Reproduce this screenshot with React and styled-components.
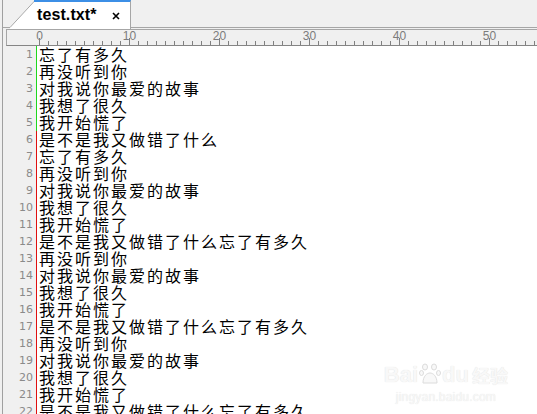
import React from "react";
import styled, { createGlobalStyle } from "styled-components";

const Global = createGlobalStyle`
  html, body { margin: 0; padding: 0; background: #f0f0f0; }
  body { width: 537px; height: 414px; overflow: hidden; }
`;

const Frame = styled.div`
  position: relative;
  width: 535px;
  height: 414px;
  margin-left: 2px;
  border-left: 1px solid #a0a0a0;
  background: #f0f0f0;
  display: flex;
  flex-direction: column;
  overflow: hidden;
`;

const TabBar = styled.div`
  height: 29px;
  flex: none;
  display: flex;
  padding-left: 7px;
  background: linear-gradient(
    to bottom,
    #f0f0f0 27px,
    #a6a6a6 27px,
    #a6a6a6 28px,
    #f0f0f0 28px
  );
`;

const Tab = styled.div`
  display: flex;
  height: 29px;
`;

const TabBody = styled.div`
  width: 93px;
  height: 27px;
  background: #ffffff;
  border-top: 2px solid #3c8fe6;
  border-right: 1px solid #a6a6a6;
  display: flex;
  align-items: flex-start;
  padding-left: 2px;
`;

const TabTitle = styled.span`
  font-family: "Liberation Sans", Arial, sans-serif;
  font-weight: bold;
  font-size: 16px;
  line-height: 18px;
  margin-top: 4px;
  color: #000;
  letter-spacing: 0.1px;
`;

const Close = styled.svg`
  margin-left: 15px;
  margin-top: 10px;
  flex: none;
`;

const Ruler = styled.div`
  flex: none;
  height: 15px;
  margin-left: 3px;
  border-top: 1px solid #a6a6a6;
  border-bottom: 1px solid #858585;
  border-left: 1px solid #a6a6a6;
  background: #f0f0f0;
`;

const Editor = styled.div`
  flex: 1;
  background: #ffffff;
  display: flex;
  flex-direction: column;
`;

const Row = styled.div`
  display: flex;
  height: 17px;
  flex: none;
`;

const LineNo = styled.div`
  width: 30px;
  padding-right: 3px;
  flex: none;
  background: #f0f0f0;
  text-align: right;
  font-family: "DejaVu Sans", Verdana, sans-serif;
  font-size: 11px;
  line-height: 17px;
  color: #8a8a8a;
`;

const Code = styled.div`
  border-left: 1px solid ${(p) => p.$mark};
  padding-left: 2px;
  height: 17px;
  font-family: "Noto Sans CJK SC", "Noto Sans", sans-serif;
  font-size: 16px;
  letter-spacing: 2px;
  line-height: 17px;
  color: #000;
  white-space: nowrap;
`;

const Watermark = styled.div`
  position: absolute;
  right: 30px;
  bottom: 10px;
  display: flex;
  flex-direction: column;
  align-items: center;
  color: #f8f8f8;
  text-shadow: 0 0 1px #dcdcdc;
  font-family: "Liberation Sans", Arial, sans-serif;
  pointer-events: none;
`;

const MarkTop = styled.div`
  display: flex;
  align-items: flex-end;
  font-size: 22px;
  font-weight: bold;
  line-height: 22px;
`;

const MarkCn = styled.span`
  font-family: "Noto Sans CJK SC", sans-serif;
  font-size: 18px;
  margin-left: 3px;
`;

const MarkUrl = styled.div`
  font-size: 12px;
  margin-top: 4px;
  letter-spacing: 0.2px;
`;

const lines = [
  "忘了有多久",
  "再没听到你",
  "对我说你最爱的故事",
  "我想了很久",
  "我开始慌了",
  "是不是我又做错了什么",
  "忘了有多久",
  "再没听到你",
  "对我说你最爱的故事",
  "我想了很久",
  "我开始慌了",
  "是不是我又做错了什么忘了有多久",
  "再没听到你",
  "对我说你最爱的故事",
  "我想了很久",
  "我开始慌了",
  "是不是我又做错了什么忘了有多久",
  "再没听到你",
  "对我说你最爱的故事",
  "我想了很久",
  "我开始慌了",
  "是不是我又做错了什么忘了有多久",
];

function RulerMarks() {
  const ticks = [];
  const labels = [];
  for (let c = 0; c <= 56; c++) {
    const x = 32 + 9 * c + 0.5;
    const major = c % 10 === 0;
    ticks.push(
      <line key={c} x1={x} x2={x} y1={major ? 8 : 11} y2={15} stroke="#808080" strokeWidth="1" />
    );
    if (major) {
      labels.push(
        <text
          key={"l" + c}
          x={x}
          y={10}
          textAnchor="middle"
          fontFamily="'Liberation Sans', Arial, sans-serif"
          fontSize="12"
          fill="#7c7c7c"
        >
          {c}
        </text>
      );
    }
  }
  return (
    <svg width="531" height="15" style={{ display: "block" }}>
      {labels}
      {ticks}
    </svg>
  );
}

export default function App() {
  return (
    <>
      <Global />
      <Frame>
        <TabBar>
          <Tab>
            <svg width="25" height="29" style={{ display: "block", flex: "none" }}>
              <polygon points="0,29 0,27 25,0 25,29" fill="#ffffff" />
              <line x1="0" y1="27.5" x2="25" y2="0.5" stroke="#a6a6a6" strokeWidth="1" />
              <line x1="24" y1="1" x2="25" y2="1" stroke="#3c8fe6" strokeWidth="2" />
            </svg>
            <TabBody>
              <TabTitle>test.txt*</TabTitle>
              <Close width="8" height="8" viewBox="0 0 8 8">
                <path d="M1 1 L7 7 M7 1 L1 7" stroke="#000" strokeWidth="1.6" />
              </Close>
            </TabBody>
          </Tab>
        </TabBar>
        <Ruler>
          <RulerMarks />
        </Ruler>
        <Editor>
          {lines.map((t, i) => (
            <Row key={i}>
              <LineNo>{i + 1}</LineNo>
              <Code $mark={i < 5 ? "#1fd81f" : "#e01010"}>{t}</Code>
            </Row>
          ))}
        </Editor>
        <Watermark>
          <MarkTop>
            Bai
            <svg width="22" height="24" viewBox="0 0 22 24" style={{ margin: "0 1px" }}>
              <g fill="#f8f8f8" stroke="#dcdcdc" strokeWidth="1">
                <ellipse cx="6" cy="5" rx="2.5" ry="3" />
                <ellipse cx="15" cy="5" rx="2.5" ry="3" />
                <ellipse cx="2.5" cy="11" rx="2" ry="2.5" />
                <ellipse cx="19.5" cy="11" rx="2" ry="2.5" />
                <path d="M4 21 C4 14 8 11 11 11 C14 11 18 14 18 21 Z" />
              </g>
            </svg>
            du
            <MarkCn>经验</MarkCn>
          </MarkTop>
          <MarkUrl>jingyan.baidu.com</MarkUrl>
        </Watermark>
      </Frame>
    </>
  );
}
